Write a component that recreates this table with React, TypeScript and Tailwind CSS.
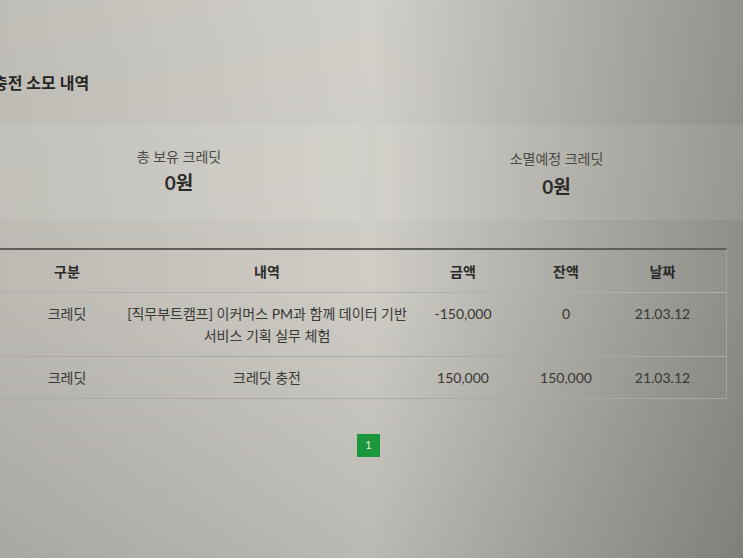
const rows = [
  {
    kind: "크레딧",
    detail: ["[직무부트캠프] 이커머스 PM과 함께 데이터 기반", "서비스 기획 실무 체험"],
    amount: "-150,000",
    balance: "0",
    date: "21.03.12",
  },
  {
    kind: "크레딧",
    detail: ["크레딧 충전"],
    amount: "150,000",
    balance: "150,000",
    date: "21.03.12",
  },
];

const cols = "grid grid-cols-[132px_290px_102px_104px_109px]";

export default function App() {
  return (
    <div
      className="w-[743px] h-[558px] overflow-hidden bg-linear-to-r from-[#bcbab3] via-[#cfcdc6] to-[#8e8d87] text-[#383835]"
      style={{ fontFamily: 'Lato, "Noto Sans CJK KR", sans-serif' }}
    >
      {/* vertical shading */}
      <div className="w-full h-full bg-linear-to-b from-white/5 via-transparent to-black/10 pt-[74px]">
        <h2 className="ml-[-7px] text-[16px] leading-[18px] font-bold text-[#262624]">
          충전 소모 내역
        </h2>

        {/* Summary cards */}
        <div className="mt-[33px] ml-[-20px] flex gap-[15px]">
          <div className="shrink-0 w-[382px] h-[95px] bg-white/[0.07] flex flex-col items-center justify-center pl-[16px] pb-[4px]">
            <span className="text-[14px] leading-[18px] text-[#4a4a46]">총 보유 크레딧</span>
            <span className="mt-[6px] text-[19px] leading-[21px] font-bold text-[#2b2b29]">0원</span>
          </div>
          <div className="shrink-0 w-[383px] h-[95px] bg-white/[0.07] flex flex-col items-center justify-center pr-[24px] pt-[2px]">
            <span className="text-[14px] leading-[18px] text-[#4a4a46]">소멸예정 크레딧</span>
            <span className="mt-[8px] text-[19px] leading-[21px] font-bold text-[#2b2b29]">0원</span>
          </div>
        </div>

        {/* History table */}
        <div className="mt-[28px] ml-[-10px] w-[737px] border-t-2 border-t-[#5f5e59] border-r border-r-[#a4a39d] text-[14px]">
          <div className={`${cols} h-[43px] items-center font-bold text-[#2a2a28] border-b border-[#b1b0aa]`}>
            <div className="pl-[22px] text-center">구분</div>
            <div className="text-center">내역</div>
            <div className="text-center">금액</div>
            <div className="text-center">잔액</div>
            <div className="pr-[20px] text-center">날짜</div>
          </div>
          {rows.map((r, i) => (
            <div
              key={i}
              className={`${cols} items-start leading-[22px] border-b border-[#aaa9a3] pt-[10px] pb-[9px]`}
            >
              <div className="pl-[22px] text-center">{r.kind}</div>
              <div className="text-center">
                {r.detail.map((d) => (
                  <div key={d}>{d}</div>
                ))}
              </div>
              <div className="text-center">{r.amount}</div>
              <div className="text-center">{r.balance}</div>
              <div className="pr-[20px] text-center">{r.date}</div>
            </div>
          ))}
        </div>

        {/* Pagination */}
        <div className="mt-[35px] flex justify-center pr-[6px]">
          <span className="w-[23px] h-[23px] bg-[#1c983c] text-[#e4f2e6] text-[11px] flex items-center justify-center">
            1
          </span>
        </div>
      </div>
    </div>
  );
}
